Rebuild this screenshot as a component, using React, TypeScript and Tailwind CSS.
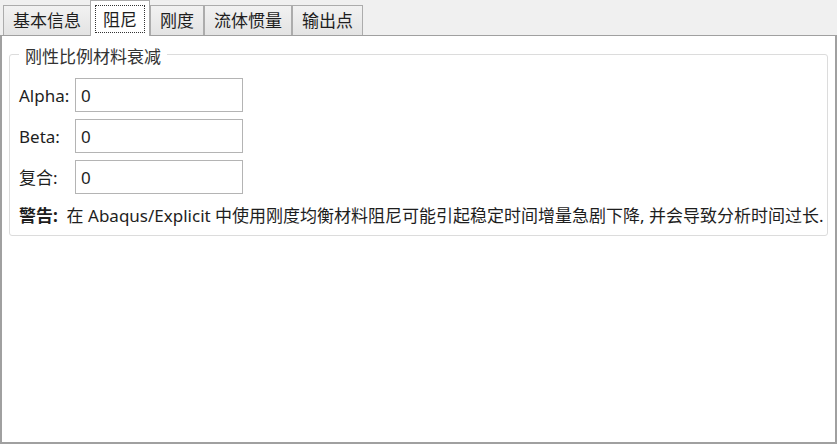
const tabs = ["基本信息", "阻尼", "刚度", "流体惯量", "输出点"];

const fields = [
  { label: "Alpha:", value: "0" },
  { label: "Beta:", value: "0" },
  { label: "复合:", value: "0" },
];

export default function App() {
  return (
    <div
      className="w-[837px] h-[444px] bg-[#f0f0f0] flex flex-col text-[#1e1e1e] overflow-hidden"
      style={{ fontFamily: '"Noto Sans", "Noto Sans CJK SC", sans-serif' }}
    >
      {/* tab strip */}
      <div className="h-[35px] flex items-end pl-[3px] relative z-10">
        {tabs.map((t, i) =>
          i === 1 ? (
            <div
              key={t}
              className="h-[36px] -mb-px -ml-px bg-white border border-b-0 border-[#acacac] px-[4px] pt-[4px] flex items-start"
            >
              <span className="h-[28px] px-[7px] border border-dotted border-[#333] flex items-center text-[17px] leading-none">
                {t}
              </span>
            </div>
          ) : (
            <div
              key={t}
              className="h-[30px] bg-gradient-to-b from-[#f2f2f2] to-[#e3e3e3] border border-b-0 border-[#acacac] px-[9px] flex items-center text-[17px] leading-none"
            >
              {t}
            </div>
          )
        )}
      </div>

      {/* panel */}
      <div className="flex-1 bg-white border-2 border-t border-[#a0a0a0] px-[7px] pt-[10px]">
        <fieldset className="min-w-0 border border-[#dcdcdc] rounded-[3px] px-[9px] pb-[11px] pt-[15px]">
          <legend className="px-[6px] text-[17px] leading-none text-[#333]">
            <span className="relative top-[2px]">刚性比例材料衰减</span>
          </legend>
          <div className="flex flex-col gap-[7px]">
            {fields.map((f) => (
              <div key={f.label} className="flex items-center">
                <span className="w-[56px] text-[17px] leading-none">{f.label}</span>
                <div className="w-[168px] h-[34px] border border-[#b4b4b4] flex items-center px-[5px] text-[17px] leading-none">
                  {f.value}
                </div>
              </div>
            ))}
          </div>
          <p className="mt-[13px] text-[17px] leading-none whitespace-nowrap">
            <span className="font-bold">警告:</span>&nbsp; 在 Abaqus/Explicit 中使用刚度均衡材料阻尼可能引起稳定时间增量急剧下降, 并会导致分析时间过长.
          </p>
        </fieldset>
      </div>
    </div>
  );
}
